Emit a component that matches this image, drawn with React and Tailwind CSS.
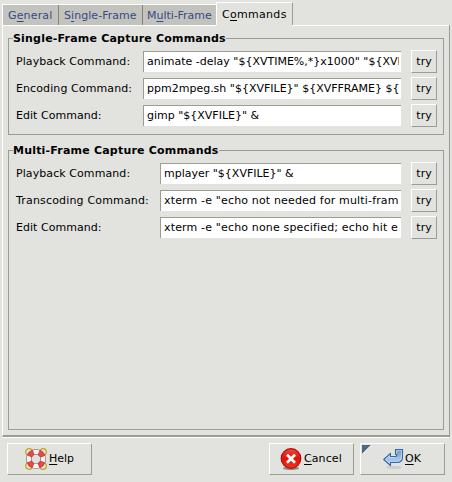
import React from "react";

const raised = "border border-t-white border-l-white border-r-[#9c9c92] border-b-[#9c9c92]";

function HelpIcon() {
  return (
    <svg width="22" height="22" viewBox="0 0 22 22" fill="none" className="shrink-0">
      {[[4, 4], [18, 4], [4, 18], [18, 18]].map(([x, y]) => (
        <circle key={`${x}-${y}`} cx={x} cy={y} r="3.3" stroke="#c8a416" strokeWidth="1.3" />
      ))}
      <circle cx="11" cy="11" r="7.2" stroke="#85857f" strokeWidth="5.8" />
      <circle cx="11" cy="11" r="7.2" stroke="#f4f4f2" strokeWidth="4.2" />
      <circle cx="11" cy="11" r="7.2" stroke="#c92a2a" strokeWidth="5" strokeDasharray="5.9 5.41" strokeDashoffset="-2.7" />
      <circle cx="11" cy="11" r="7.2" stroke="#f34546" strokeWidth="3.8" strokeDasharray="5.1 6.21" strokeDashoffset="-3.1" />
    </svg>
  );
}

function CancelIcon() {
  return (
    <svg width="22" height="23" viewBox="0 0 22 23" className="shrink-0">
      <defs>
        <linearGradient id="red" x1="0" y1="0" x2="0" y2="1">
          <stop offset="0" stopColor="#ee4b3c" />
          <stop offset="0.5" stopColor="#e01408" />
          <stop offset="1" stopColor="#f03820" />
        </linearGradient>
      </defs>
      <ellipse cx="11" cy="20.2" rx="8" ry="1.8" fill="#8d8d86" />
      <circle cx="11" cy="10.5" r="9.8" fill="url(#red)" stroke="#b00d0d" strokeWidth="1.2" />
      <path d="M7 6.7 L15 14.7 M15 6.7 L7 14.7" stroke="#fff" strokeWidth="2.7" />
    </svg>
  );
}

function OkIcon() {
  return (
    <svg width="22" height="22" viewBox="0 0 22 22" className="shrink-0">
      <defs>
        <linearGradient id="blue" x1="0" y1="0" x2="0" y2="1">
          <stop offset="0" stopColor="#5f8dc6" />
          <stop offset="0.6" stopColor="#a8c8ea" />
          <stop offset="1" stopColor="#749fd4" />
        </linearGradient>
      </defs>
      <ellipse cx="11" cy="19.5" rx="8" ry="1.6" fill="#cfcfca" />
      <path d="M0.7 11.5 L7.5 5.4 V8.5 H12 Q13.7 8.5 13.7 7.4 V6.5 H12.5 V1.5 H19.5 V9 Q19.5 14.5 14 14.5 H7.5 V17.7 Z" fill="url(#blue)" stroke="#3465a4" strokeWidth="1.1" strokeLinejoin="round" />
      <path d="M13.6 5.5 V2.6 H18.4 V8.8 Q18.4 13.3 13.8 13.4 H6.5 V15.3 L2.3 11.5 L6.5 7.7 V9.6 H12.2" fill="none" stroke="#c9ddf2" strokeWidth="0.8" />
    </svg>
  );
}

function Tab({ before, letter, after, className }) {
  return (
    <div className={`flex h-5 shrink-0 items-center border-r border-[#85857d] bg-[#c3c3bd] text-[#354a87] ${className}`}>
      <span className="whitespace-pre">{before}<u className="underline-offset-2">{letter}</u>{after}</span>
    </div>
  );
}

function Row({ label, value, labelWidth, labelTracking, valueTracking }) {
  return (
    <div className="flex h-[23px] items-center">
      <span className={`shrink-0 whitespace-nowrap ${labelWidth} ${labelTracking}`}>{label}</span>
      <div className="flex h-[21px] min-w-0 flex-1 items-center border-t border-l border-[#9c9c92] bg-white pr-0.5 pb-px pl-[3px]">
        <span className={`w-full overflow-hidden leading-[17px] whitespace-pre ${valueTracking}`}>{value}</span>
      </div>
      <button className={`ml-2.5 flex h-[23px] w-[26px] shrink-0 items-center justify-center ${raised}`}>try</button>
    </div>
  );
}

function Group({ title, rows, labelWidth, className }) {
  return (
    <section className={`flex flex-col border border-[#9c9c92] pr-[6px] pl-[7px] ${className}`}>
      <h2 className="-mt-2 -ml-[3px] mb-[4px] h-[15px] self-start bg-[#e2e3de] leading-[15px] font-bold tracking-[0.2px] whitespace-nowrap">{title}</h2>
      <div className="flex flex-col gap-1">
        {rows.map(([label, value, labelTracking, valueTracking]) => (
          <Row key={label} label={label} value={value} labelWidth={labelWidth} labelTracking={labelTracking} valueTracking={valueTracking} />
        ))}
      </div>
    </section>
  );
}

const single = [
  ["Playback Command:", 'animate -delay "${XVTIME%,*}x1000" "${XVF', "tracking-[0.08px]", "tracking-normal"],
  ["Encoding Command:", 'ppm2mpeg.sh "${XVFILE}" ${XVFFRAME} ${', "tracking-[0.1px]", "tracking-normal"],
  ["Edit Command:", 'gimp "${XVFILE}" &', "tracking-[0.04px]", "tracking-normal"],
];

const multi = [
  ["Playback Command:", 'mplayer "${XVFILE}" &', "tracking-[0.08px]", "tracking-normal"],
  ["Transcoding Command:", 'xterm -e "echo not needed for multi-fram', "tracking-[0.17px]", "tracking-[0.16px]"],
  ["Edit Command:", 'xterm -e "echo none specified; echo hit e', "tracking-[0.04px]", "tracking-[0.16px]"],
];

export default function App() {
  return (
    <div className="flex h-[482px] w-[452px] flex-col overflow-hidden bg-[#e2e3de] pt-0.5 pl-0.5 font-['DejaVu_Sans',sans-serif] text-[11px] leading-[15px] text-black">
      <div className="flex h-[23px] items-end">
        <div className="flex h-[21px] border-t border-l border-white">
          <Tab before="G" letter="e" after="neral" className="w-14 pl-[5px] tracking-[0.15px]" />
          <Tab before="S" letter="i" after="ngle-Frame" className="w-[84px] pl-[5px] tracking-[0.05px]" />
          <Tab before="M" letter="u" after="lti-Frame" className="w-[73px] border-r-0 pl-1 tracking-[-0.05px]" />
        </div>
        <div className="flex h-[23px] w-[77px] items-center border-t border-r border-l border-t-white border-r-[#9c9c92] border-l-white pl-[5px] tracking-[0.3px]">
          <span>C<u className="underline-offset-2">o</u>mmands</span>
        </div>
        <div className="h-px flex-1" />
      </div>
      <main className="flex h-[412px] w-[448px] shrink-0 flex-col border-r border-b-2 border-l border-r-[#9c9c92] border-b-[#9c9c92] border-l-white">
        <div className="flex h-px shrink-0">
          <div className="w-[213px] bg-white" />
          <div className="w-[76px]" />
          <div className="flex-1 bg-white" />
        </div>
        <div className="flex flex-col pt-3 pl-[5px]">
          <Group title="Single-Frame Capture Commands" rows={single} labelWidth="w-[127px]" className="h-[97px] w-[436px]" />
          <Group title="Multi-Frame Capture Commands" rows={multi} labelWidth="w-[144px]" className="mt-[15px] h-[280px] w-[436px]" />
        </div>
      </main>
      <div className="h-px w-[447px] shrink-0 bg-white" />
      <footer className="mt-[5px] flex pl-[5px]">
        <button className={`flex h-8 w-[85px] items-center gap-0.5 pl-[17px] ${raised}`}>
          <HelpIcon /><span className="-mt-px"><u className="underline-offset-2">H</u>elp</span>
        </button>
        <button className={`ml-[177px] flex h-8 w-[85px] items-center gap-0.5 pl-2.5 tracking-[0.1px] ${raised}`}>
          <CancelIcon /><span className="-mt-px"><u className="underline-offset-2">C</u>ancel</span>
        </button>
        <button className={`relative ml-1.5 flex h-8 w-[85px] items-center pl-[22px] ${raised}`}>
          <svg className="absolute top-px left-px" width="10" height="10"><path d="M0 0H9L0 9Z" fill="#4b6983" /><path d="M9 0.5L0.5 9" stroke="#f5f5f2" /></svg>
          <OkIcon /><span className="-mt-px"><u className="underline-offset-2">O</u>K</span>
        </button>
      </footer>
    </div>
  );
}
